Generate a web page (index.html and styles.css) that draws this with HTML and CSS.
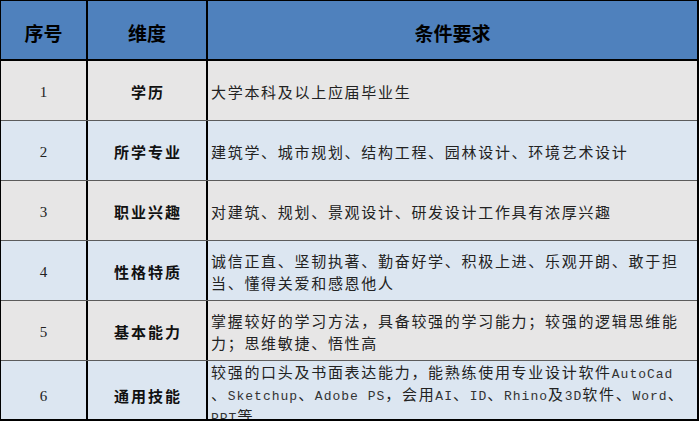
FILE: index.html
```html
<!DOCTYPE html>
<html lang="zh">
<head>
<meta charset="utf-8">
<link rel="stylesheet" href="styles.css">
</head>
<body>
<div class="sheet">
  <div class="row head">
    <div class="cell c1">序号</div>
    <div class="cell c2">维度</div>
    <div class="cell c3">条件要求</div>
  </div>
  <div class="row gray">
    <div class="cell c1">1</div>
    <div class="cell c2">学历</div>
    <div class="cell c3">大学本科及以上应届毕业生</div>
  </div>
  <div class="row blue">
    <div class="cell c1">2</div>
    <div class="cell c2">所学专业</div>
    <div class="cell c3">建筑学、城市规划、结构工程、园林设计、环境艺术设计</div>
  </div>
  <div class="row gray">
    <div class="cell c1">3</div>
    <div class="cell c2">职业兴趣</div>
    <div class="cell c3">对建筑、规划、景观设计、研发设计工作具有浓厚兴趣</div>
  </div>
  <div class="row blue">
    <div class="cell c1">4</div>
    <div class="cell c2">性格特质</div>
    <div class="cell c3">诚信正直、坚韧执著、勤奋好学、积极上进、乐观开朗、敢于担当、懂得关爱和感恩他人</div>
  </div>
  <div class="row gray">
    <div class="cell c1">5</div>
    <div class="cell c2">基本能力</div>
    <div class="cell c3">掌握较好的学习方法，具备较强的学习能力；较强的逻辑思维能力；思维敏捷、悟性高</div>
  </div>
  <div class="row blue last">
    <div class="cell c1">6</div>
    <div class="cell c2">通用技能</div>
    <div class="cell c3 top">较强的口头及书面表达能力，能熟练使用专业设计软件<span class="lat">AutoCad</span>、<span class="lat">Sketchup</span>、<span class="lat">Adobe PS</span>，会用<span class="lat">AI</span>、<span class="lat">ID</span>、<span class="lat">Rhino</span>及<span class="lat">3D</span>软件、<span class="lat">Word</span>、<span class="lat">PPT</span>等</div>
  </div>
</div>
</body>
</html>
```

FILE: styles.css
```css
html, body {
  margin: 0;
  padding: 0;
  background: #ffffff;
}

.sheet {
  box-sizing: border-box;
  width: 699px;
  height: 421px;
  overflow: hidden;
  border-top: 1px solid #000;
  border-left: 1px solid #000;
  border-right: 2px solid #000;
  border-bottom: 2px solid #000;
  font-family: "Noto Sans CJK SC", sans-serif;
  color: #111;
}

.row {
  display: grid;
  grid-template-columns: 87px 120px 1fr;
  height: 60px;
  box-sizing: border-box;
  border-bottom: 1px solid #5c5c5c;
}

.row.head {
  height: 60px;
  background: #4f81bd;
  border-bottom: 2px solid #000;
}

.row.gray { background: #e7e6e6; }
.row.blue { background: #dce6f1; }

.row.last {
  height: 62px;
  border-bottom: none;
}

.cell {
  display: flex;
  align-items: center;
  box-sizing: border-box;
  min-width: 0;
}

.c1, .c2 {
  justify-content: center;
  border-right: 2px solid #000;
}

.c1 {
  font-family: "Liberation Serif", serif;
  font-size: 15px;
  color: #222;
  padding-top: 4px;
}

.c2 {
  font-size: 15px;
  font-weight: 700;
  letter-spacing: 2px;
  padding-left: 2px;
  padding-top: 2px;
}

.c3 {
  display: block;
  align-self: center;
  font-size: 15px;
  letter-spacing: 1.7px;
  line-height: 22px;
  padding: 2px 4px 0 3px;
  color: #222;
}

.c3.top {
  align-self: start;
  line-height: 19px;
  padding: 1px 10px 0 3px;
  line-break: anywhere;
}

.lat {
  font-family: "Liberation Mono", monospace;
  font-size: 13px;
  letter-spacing: 1px;
  color: #333;
}

.head .cell {
  font-family: "Noto Sans CJK SC", sans-serif;
  font-size: 19px;
  font-weight: 700;
  letter-spacing: 0;
  color: #000;
  justify-content: center;
  padding: 5px 0 0 0;
}

.head .c3 {
  display: flex;
  align-self: stretch;
  line-height: normal;
}
```
